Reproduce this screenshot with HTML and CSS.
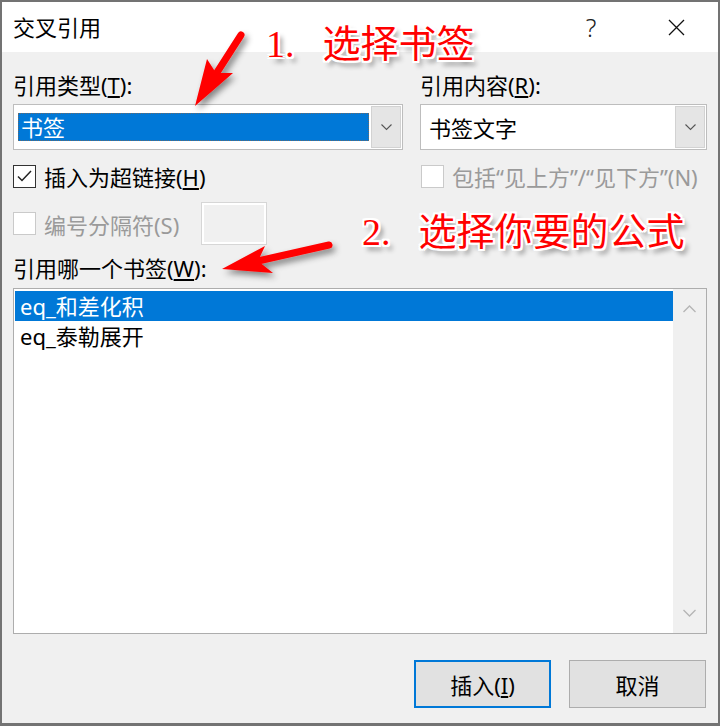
FILE: index.html
```html
<!DOCTYPE html>
<html lang="zh-CN">
<head>
  <meta charset="UTF-8" />
  <title>交叉引用</title>
  <link rel="stylesheet" href="styles.css">
</head>
<body>

<div class="window">
  <div class="titlebar">
    <span class="title">交叉引用</span>
    <span class="tb-btn help">?</span>
    <span class="tb-btn close">
      <svg width="17" height="17" viewBox="0 0 17 17"><path d="M1 1 L16 16 M16 1 L1 16" stroke="#111" stroke-width="1.3" fill="none"/></svg>
    </span>
  </div>

  <div class="content">
    <div class="grid labels">
      <div class="label">引用类型(<u>T</u>):</div>
      <div class="label">引用内容(<u>R</u>):</div>
    </div>

    <div class="grid combos">
      <div class="combo">
        <div class="combo-text"><span class="selected">书签</span></div>
        <div class="combo-btn"><svg width="11" height="7" viewBox="0 0 11 7"><polyline points="0.5,0.5 5.5,5.5 10.5,0.5" stroke="#555" stroke-width="1.1" fill="none"/></svg></div>
      </div>
      <div class="combo">
        <div class="combo-text plain">书签文字</div>
        <div class="combo-btn"><svg width="11" height="7" viewBox="0 0 11 7"><polyline points="0.5,0.5 5.5,5.5 10.5,0.5" stroke="#555" stroke-width="1.1" fill="none"/></svg></div>
      </div>
    </div>

    <div class="grid checks">
      <div class="check">
        <span class="box"><svg width="21" height="21" viewBox="0 0 21 21"><polyline points="4,10.5 8,14.5 17,5" stroke="#222" stroke-width="1.5" fill="none"/></svg></span>
        <span>插入为超链接(<u>H</u>)</span>
      </div>
      <div class="check disabled">
        <span class="box"></span>
        <span>包括“见上方”/“见下方”(N)</span>
      </div>
    </div>

    <div class="check disabled sep-row">
      <span class="box"></span>
      <span>编号分隔符(S)</span>
      <span class="sep-input"></span>
    </div>

    <div class="label list-label">引用哪一个书签(<u>W</u>):</div>

    <div class="listbox">
      <div class="items">
        <div class="item selected">eq_和差化积</div>
        <div class="item">eq_泰勒展开</div>
      </div>
      <div class="scrollbar">
        <svg width="13" height="8" viewBox="0 0 13 8"><polyline points="0.5,7 6.5,1 12.5,7" stroke="#b5b5b5" stroke-width="1.3" fill="none"/></svg>
        <svg width="13" height="8" viewBox="0 0 13 8"><polyline points="0.5,1 6.5,7 12.5,1" stroke="#b5b5b5" stroke-width="1.3" fill="none"/></svg>
      </div>
    </div>

    <div class="buttons">
      <button class="btn default">插入(<u>I</u>)</button>
      <button class="btn">取消</button>
    </div>
  </div>

  <!-- 标注 -->
  <div class="note note-1"><span class="num">1.</span>选择书签</div>
  <div class="note note-2"><span class="num">2.</span>选择你要的公式</div>

  <svg class="arrows" width="720" height="726" viewBox="0 0 720 726">
    <defs>
      <filter id="shadow" x="-30%" y="-30%" width="160%" height="160%">
        <feDropShadow dx="3" dy="4" stdDeviation="3" flood-color="#000" flood-opacity="0.45"/>
      </filter>
    </defs>
    <g filter="url(#shadow)" fill="#ff0000">
      <line x1="241" y1="35" x2="216" y2="74" stroke="#ff0000" stroke-width="7" stroke-linecap="round"/>
      <polygon points="195,106 207,59 216,73 233,73"/>
      <line x1="329" y1="245" x2="258" y2="261" stroke="#ff0000" stroke-width="7" stroke-linecap="round"/>
      <polygon points="222,269 265,246 258,261 273,273"/>
    </g>
  </svg>
</div>

</body>
</html>
```

FILE: styles.css
```css
body {
  margin: 0;
  font-family: "Noto Sans", "Noto Sans CJK SC", sans-serif;
  font-size: 22px;
  color: #000;
}
.window {
  position: relative;
  width: 720px;
  height: 726px;
  box-sizing: border-box;
  border: 2px solid #737373;
  border-bottom-width: 3px;
  background: #f0f0f0;
  display: flex;
  flex-direction: column;
  overflow: hidden;
}
.titlebar {
  height: 50px;
  background: #fff;
  display: flex;
  align-items: center;
  padding-left: 11px;
  padding-right: 19px;
  flex-shrink: 0;
}
.title {
  flex: 1;
  line-height: 28px;
}
.tb-btn {
  width: 46px;
  display: flex;
  justify-content: center;
  align-items: center;
}
.help {
  font-size: 25px;
  font-weight: 300;
  color: #222;
  margin-right: 39px;
}
.content {
  flex: 1;
  padding: 0 11px 0 11px;
}
.grid {
  display: grid;
  grid-template-columns: 390px 1fr;
  column-gap: 17px;
}
.label {
  line-height: 28px;
  white-space: nowrap;
}
.labels {
  margin-top: 19px;
}
.combos {
  margin-top: 5px;
}
.combo {
  height: 46px;
  box-sizing: border-box;
  border: 1px solid #bdbdbd;
  background: #fff;
  padding: 1px;
  display: flex;
}
.combo-text {
  flex: 1;
  display: flex;
  align-items: center;
  padding: 0 2px 0 3px;
}
.combo-text.plain {
  padding-left: 7px;
}
.selected {
  flex: 1;
  background: #0078d7;
  color: #fff;
  line-height: 26px;
  height: 26px;
  padding-left: 2px;
  border: 1px dotted #6a6a6a;
}
.combo-btn {
  width: 30px;
  background: #e5e5e5;
  box-sizing: border-box;
  border: 1px solid #d2d2d2;
  display: flex;
  align-items: center;
  justify-content: center;
}
.checks {
  margin-top: 12px;
}
.check {
  display: flex;
  align-items: center;
  height: 28px;
  white-space: nowrap;
}
.box {
  width: 23px;
  height: 23px;
  box-sizing: border-box;
  border: 1px solid #333;
  background: #fff;
  margin-right: 8px;
  flex-shrink: 0;
  display: flex;
}
.check.disabled {
  color: #9a9a9a;
}
.check.disabled .box {
  border-color: #cacaca;
}
.grid .check:last-child .box {
  margin-left: 1px;
}
.sep-row {
  margin-top: 12px;
  height: 43px;
}
.sep-input {
  width: 66px;
  height: 43px;
  box-sizing: border-box;
  border: 1px solid #d6d6d6;
  background: #f0f0f0;
  box-shadow: inset 0 0 0 2px #fff;
  margin-left: 22px;
}
.list-label {
  margin-top: 9px;
}
.listbox {
  margin-top: 6px;
  height: 346px;
  box-sizing: border-box;
  border: 1px solid #adadad;
  background: #fff;
  display: flex;
}
.items {
  flex: 1;
  padding: 2px 0 0 1px;
}
.item {
  height: 30px;
  line-height: 30px;
  padding-left: 5px;
}
.item.selected {
  border: none;
  padding-left: 5px;
}
.scrollbar {
  width: 33px;
  background: #f0f0f0;
  display: flex;
  flex-direction: column;
  justify-content: space-between;
  align-items: center;
  padding: 16px 0 16px;
}
.buttons {
  margin-top: 26px;
  display: flex;
  justify-content: flex-end;
  gap: 18px;
  padding-right: 1px;
}
.btn {
  width: 137px;
  height: 48px;
  font-family: inherit;
  font-size: 22px;
  background: #e1e1e1;
  border: 1px solid #adadad;
  color: #000;
  padding: 0;
}
.btn.default {
  border: 2px solid #0078d7;
}
.note {
  position: absolute;
  font-family: "Liberation Serif", "Noto Sans CJK SC", serif;
  font-size: 38px;
  line-height: 38px;
  color: #ff0000;
  white-space: nowrap;
  text-shadow:
    2px 0 0 #fff, -2px 0 0 #fff, 0 2px 0 #fff, 0 -2px 0 #fff,
    2px 2px 0 #fff, -2px -2px 0 #fff, 2px -2px 0 #fff, -2px 2px 0 #fff,
    4px 5px 5px rgba(0,0,0,0.45);
}
.note .num {
  margin-right: 28px;
}
.note-1 {
  left: 264px;
  top: 23px;
}
.note-2 {
  left: 360px;
  top: 211px;
}
.arrows {
  position: absolute;
  left: -2px;
  top: -2px;
  pointer-events: none;
}
```
